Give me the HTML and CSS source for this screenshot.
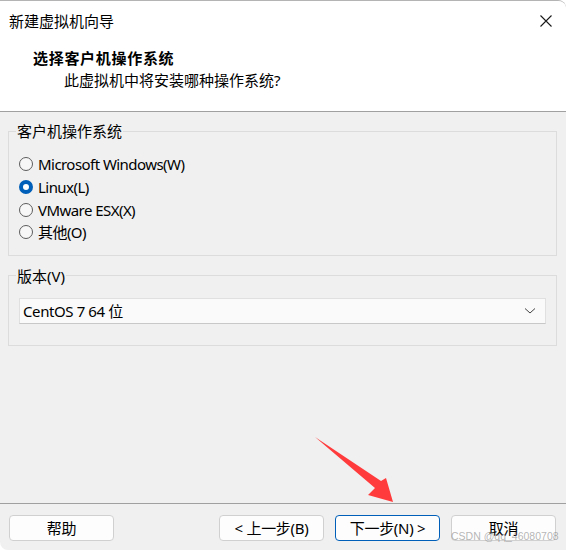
FILE: index.html
```html
<!DOCTYPE html>
<html lang="zh">
<head>
<meta charset="utf-8">
<link rel="stylesheet" href="styles.css">
</head>
<body>
<div class="window">
  <div class="top">
    <div class="titlebar">
      <span class="title">新建虚拟机向导</span>
      <svg class="close" width="14" height="14" viewBox="0 0 14 14"><path d="M1.5 1.5 L12.5 12.5 M12.5 1.5 L1.5 12.5" stroke="#1a1a1a" stroke-width="1.1" fill="none"/></svg>
    </div>
    <div class="header">
      <div class="heading">选择客户机操作系统</div>
      <div class="sub">此虚拟机中将安装哪种操作系统?</div>
    </div>
  </div>
  <div class="content">
    <fieldset class="group group-os">
      <legend>客户机操作系统</legend>
      <div class="radio"><span class="dot"></span><span>Microsoft Windows(W)</span></div>
      <div class="radio checked"><span class="dot"></span><span>Linux(L)</span></div>
      <div class="radio"><span class="dot"></span><span>VMware ESX(X)</span></div>
      <div class="radio"><span class="dot"></span><span>其他(O)</span></div>
    </fieldset>
    <fieldset class="group group-ver">
      <legend>版本(V)</legend>
      <div class="select">
        <span>CentOS 7 64 位</span>
        <svg width="12" height="8" viewBox="0 0 12 8"><path d="M1 1.5 L6 6 L11 1.5" stroke="#444" stroke-width="1" fill="none"/></svg>
      </div>
    </fieldset>
  </div>
  <div class="footer">
    <div class="btn">帮助</div>
    <div class="right">
      <div class="btn">&lt; 上一步(B)</div>
      <div class="btn primary">下一步(N) &gt;</div>
      <div class="btn">取消</div>
    </div>
  </div>
  <svg class="arrow" width="566" height="550" viewBox="0 0 566 550"><polygon points="315,437 381,481 386,478 393,502 368,495 375,488" fill="#ff3b3b"/></svg>
  <div class="watermark">CSDN @qq_46080708</div>
</div>
</body>
</html>
```

FILE: styles.css
```css
* { box-sizing: border-box; }
html, body { margin: 0; padding: 0; }
body {
  width: 566px;
  height: 550px;
  font-family: "Noto Sans", "Noto Sans CJK SC", sans-serif;
  font-size: 15px;
  color: #000;
  background: #fff;
  overflow: hidden;
}
.window {
  position: relative;
  width: 566px;
  height: 550px;
  display: flex;
  flex-direction: column;
  background: #f0f0f0;
  border-top: 1px solid #b4b4b4;
  border-top-right-radius: 8px;
  border-bottom-left-radius: 8px;
  overflow: hidden;
}
.top {
  background: #fff;
  border-bottom: 1px solid #a0a0a0;
  height: 111px;
}
.titlebar {
  height: 39px;
  display: flex;
  align-items: center;
  justify-content: space-between;
  padding: 0 13px 0 9px;
}
.title { line-height: 20px; }
.header { padding-left: 33px; }
.heading {
  font-weight: bold;
  line-height: 22px;
  margin-top: 7px;
  letter-spacing: 0.7px;
}
.sub {
  line-height: 22px;
  padding-left: 31px;
}
.content {
  flex: 1;
  padding: 9px 9px 0 8px;
}
.group {
  margin: 0;
  border: 1px solid #dcdcdc;
  padding: 0 10px;
}
.group legend {
  padding: 0 1px;
  margin-left: -3px;
  line-height: 20px;
}
.group-os { padding-top: 12px; padding-bottom: 11px; }
.radio {
  display: flex;
  align-items: center;
  gap: 5px;
  height: 22.7px;
  line-height: 20px;
  letter-spacing: -0.55px;
}
.dot {
  width: 14px;
  height: 14px;
  border-radius: 50%;
  border: 1px solid #5c5c5c;
  background: #f7f7f7;
  flex: none;
}
.radio.checked .dot {
  border: 4.5px solid #005fb8;
  background: #fff;
}
.group-ver {
  margin-top: 10px;
  padding-top: 12px;
  padding-bottom: 21px;
}
.select {
  height: 26px;
  background: #fafafa;
  border: 1px solid #e0e0e0;
  border-bottom-color: #c8c8c8;
  display: flex;
  align-items: center;
  justify-content: space-between;
  padding: 0 9px 0 3px;
  letter-spacing: -0.4px;
}
.footer {
  height: 47px;
  border-top: 1px solid #a0a0a0;
  display: flex;
  justify-content: space-between;
  align-items: flex-start;
  padding: 11px 10px 0 9px;
}
.right { display: flex; gap: 11px; }
.btn {
  width: 105px;
  height: 26px;
  border: 1px solid #d0d0d0;
  border-radius: 4px;
  background: #fdfdfd;
  display: flex;
  align-items: center;
  justify-content: center;
  line-height: 20px;
  letter-spacing: -0.3px;
}
.btn.primary { border-color: #005fb8; }
.arrow {
  position: absolute;
  left: 0;
  top: -1px;
  pointer-events: none;
}
.watermark {
  position: absolute;
  left: 451px;
  top: 528px;
  font-family: "Liberation Sans", sans-serif;
  font-size: 10.5px;
  line-height: 14px;
  color: rgba(120,120,120,0.55);
  white-space: nowrap;
}
```
